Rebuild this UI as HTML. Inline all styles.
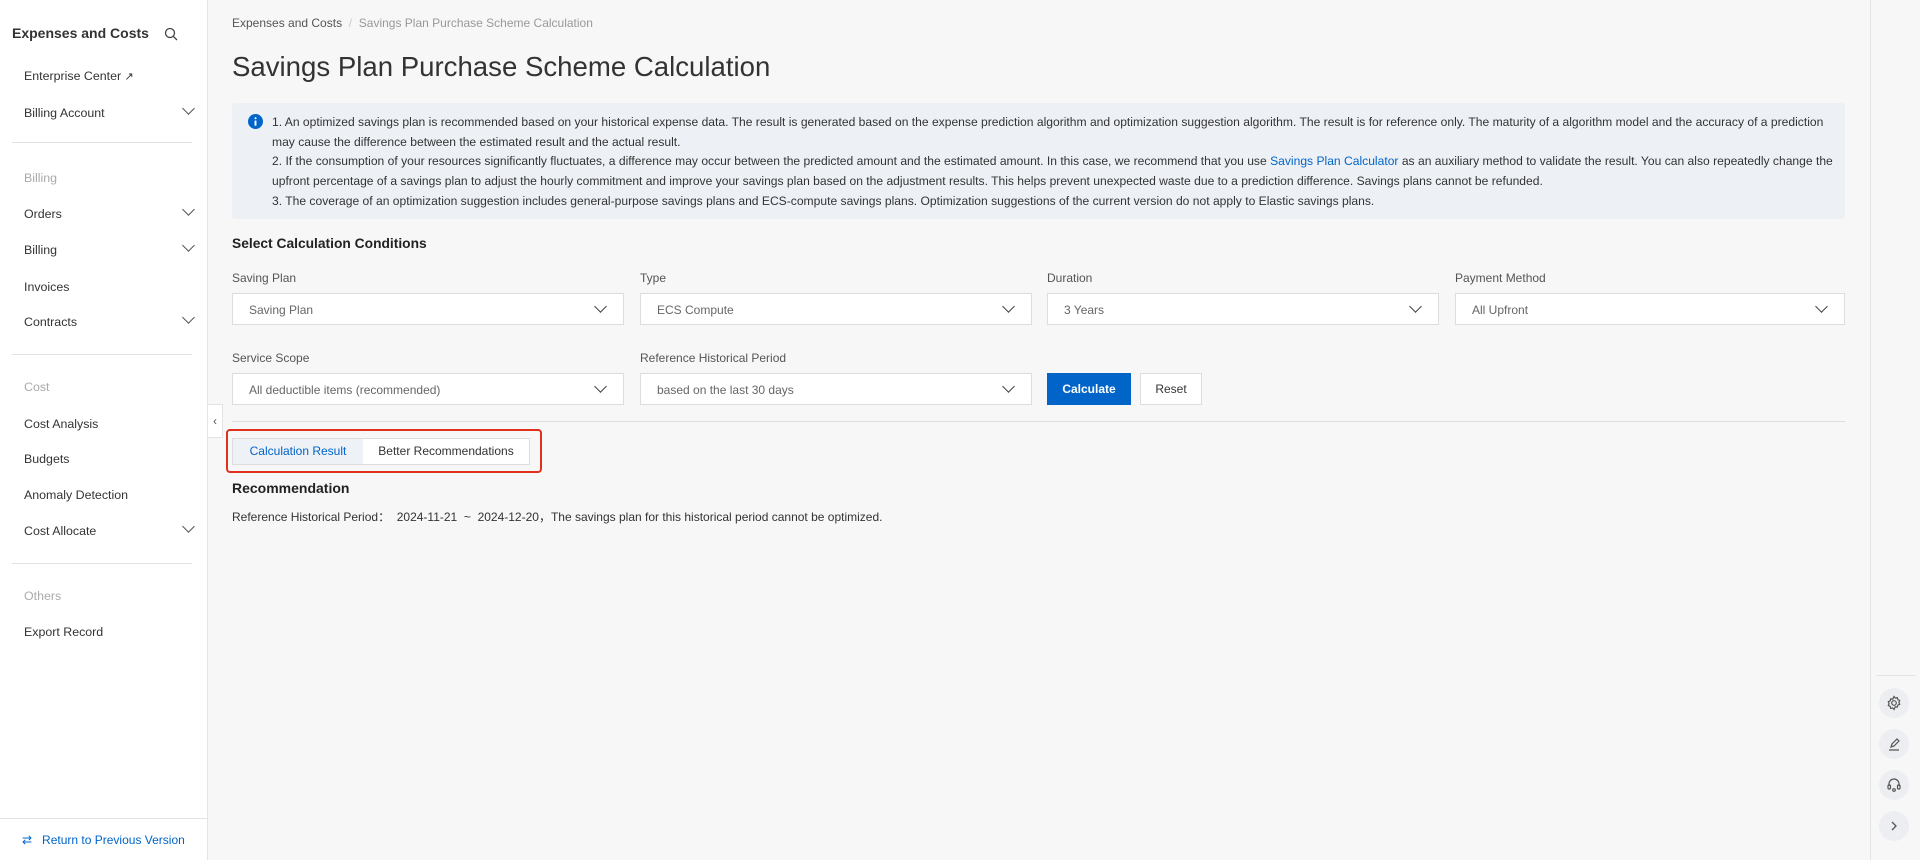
<!DOCTYPE html>
<html><head><meta charset="utf-8"><style>
*{box-sizing:border-box;margin:0;padding:0}
body{width:1920px;height:860px;overflow:hidden;background:#f7f7f7;font-family:"Liberation Sans",sans-serif;color:#333;position:relative}
.side{position:absolute;left:0;top:0;width:208px;height:860px;background:#fff;border-right:1px solid #e5e5e5}
.side .t{position:absolute;left:12px;top:25px;font-size:14px;font-weight:bold;color:#333}
.it{position:absolute;left:24px;font-size:12.4px;color:#333}
.gr{color:#aaa}
.chev{position:absolute;left:184px;width:9px;height:9px;border-right:1.5px solid #555;border-bottom:1.5px solid #555;transform:rotate(45deg)}
.dv{position:absolute;left:12px;width:180px;border-top:1px solid #e3e3e3}
.abs{position:absolute}
.sel{position:absolute;height:32px;background:#fff;border:1px solid #ddd;font-size:12px;color:#666;padding:9px 16px}
.sel:after{content:"";position:absolute;right:18px;top:8px;width:8px;height:8px;border-right:1.5px solid #444;border-bottom:1.5px solid #444;transform:rotate(45deg)}
.lbl{position:absolute;font-size:12px;color:#555}
.info{position:absolute;left:232px;top:103px;width:1613px;height:116px;background:#edf1f6;border-radius:3px}
.info p{position:absolute;left:40px;top:10px;font-size:12.1px;line-height:19.7px;color:#333;white-space:nowrap}
.rail{position:absolute;left:1870px;top:0;width:50px;height:860px;border-left:1px solid #e5e5e5;background:#f7f7f7}
.rb{position:absolute;left:1879px;width:30px;height:30px;border-radius:50%;background:#eceef1;display:flex;align-items:center;justify-content:center}
</style></head><body>
<div class="side">
<div class="t">Expenses and Costs</div>
<svg class="abs" style="left:164px;top:27px" width="14" height="14" viewBox="0 0 14 14"><circle cx="6" cy="6" r="4.5" fill="none" stroke="#444" stroke-width="1.3"/><path d="M9.3 9.3L13 13" stroke="#444" stroke-width="1.3"/></svg>
<div class="it" style="top:69px">Enterprise Center <span style="font-size:11px">↗</span></div>
<div class="it" style="top:106px">Billing Account</div><div class="chev" style="top:104px"></div>
<div class="dv" style="top:142px"></div>
<div class="it gr" style="top:171px">Billing</div>
<div class="it" style="top:207px">Orders</div><div class="chev" style="top:205px"></div>
<div class="it" style="top:243px">Billing</div><div class="chev" style="top:241px"></div>
<div class="it" style="top:280px">Invoices</div>
<div class="it" style="top:315px">Contracts</div><div class="chev" style="top:313px"></div>
<div class="dv" style="top:354px"></div>
<div class="it gr" style="top:380px">Cost</div>
<div class="it" style="top:417px">Cost Analysis</div>
<div class="it" style="top:452px">Budgets</div>
<div class="it" style="top:488px">Anomaly Detection</div>
<div class="it" style="top:524px">Cost Allocate</div><div class="chev" style="top:522px"></div>
<div class="dv" style="top:563px"></div>
<div class="it gr" style="top:589px">Others</div>
<div class="it" style="top:625px">Export Record</div>
<div class="abs" style="left:0;top:818px;width:208px;border-top:1px solid #e3e3e3"></div>
<div class="abs" style="left:22px;top:833px;font-size:12px;color:#0064c8">⇄&nbsp;&nbsp; Return to Previous Version</div>
</div>
<div class="abs" style="left:208px;top:404px;width:15px;height:34px;background:#fff;border:1px solid #e3e3e3;border-left:none;font-size:12px;color:#555;text-align:center;line-height:32px">‹</div>
<div class="abs" style="left:232px;top:16px;font-size:12px;color:#555">Expenses and Costs <span style="color:#ccc">&nbsp;/&nbsp;</span> <span style="color:#999">Savings Plan Purchase Scheme Calculation</span></div>
<div class="abs" style="left:232px;top:51px;font-size:27.6px;color:#333">Savings Plan Purchase Scheme Calculation</div>
<div class="info">
<svg class="abs" style="left:16px;top:11px" width="15" height="15" viewBox="0 0 16 16"><circle cx="8" cy="8" r="8" fill="#0064c8"/><rect x="7" y="7" width="2" height="5.5" fill="#fff"/><circle cx="8" cy="4.5" r="1.1" fill="#fff"/></svg>
<p>1. An optimized savings plan is recommended based on your historical expense data. The result is generated based on the expense prediction algorithm and optimization suggestion algorithm. The result is for reference only. The maturity of a algorithm model and the accuracy of a prediction<br>may cause the difference between the estimated result and the actual result.<br>2. If the consumption of your resources significantly fluctuates, a difference may occur between the predicted amount and the estimated amount. In this case, we recommend that you use <span style="color:#0064c8">Savings Plan Calculator</span> as an auxiliary method to validate the result. You can also repeatedly change the<br>upfront percentage of a savings plan to adjust the hourly commitment and improve your savings plan based on the adjustment results. This helps prevent unexpected waste due to a prediction difference. Savings plans cannot be refunded.<br>3. The coverage of an optimization suggestion includes general-purpose savings plans and ECS-compute savings plans. Optimization suggestions of the current version do not apply to Elastic savings plans.</p>
</div>
<div class="abs" style="left:232px;top:236px;font-size:13.8px;font-weight:bold;color:#222">Select Calculation Conditions</div>
<div class="lbl" style="left:232px;top:271px">Saving Plan</div>
<div class="lbl" style="left:640px;top:271px">Type</div>
<div class="lbl" style="left:1047px;top:271px">Duration</div>
<div class="lbl" style="left:1455px;top:271px">Payment Method</div>
<div class="sel" style="left:232px;top:293px;width:392px">Saving Plan</div>
<div class="sel" style="left:640px;top:293px;width:392px">ECS Compute</div>
<div class="sel" style="left:1047px;top:293px;width:392px">3 Years</div>
<div class="sel" style="left:1455px;top:293px;width:390px">All Upfront</div>
<div class="lbl" style="left:232px;top:351px">Service Scope</div>
<div class="lbl" style="left:640px;top:351px">Reference Historical Period</div>
<div class="sel" style="left:232px;top:373px;width:392px">All deductible items (recommended)</div>
<div class="sel" style="left:640px;top:373px;width:392px">based on the last 30 days</div>
<div class="abs" style="left:1047px;top:373px;width:84px;height:32px;background:#0064c8;color:#fff;font-size:12px;font-weight:bold;text-align:center;line-height:32px">Calculate</div>
<div class="abs" style="left:1140px;top:373px;width:62px;height:32px;background:#fff;border:1px solid #ddd;color:#333;font-size:12px;text-align:center;line-height:30px">Reset</div>
<div class="abs" style="left:232px;top:421px;width:1613px;border-top:1px solid #ddd"></div>
<div class="abs" style="left:226px;top:429px;width:316px;height:44px;border:2.5px solid #e0301e;border-radius:4px"></div>
<div class="abs" style="left:232px;top:438px;width:298px;height:27px;border:1px solid #ddd;background:#fff;font-size:12px">
<div class="abs" style="left:0;top:0;width:130px;height:25px;background:#eef1f6;color:#0064c8;text-align:center;line-height:25px">Calculation Result</div>
<div class="abs" style="left:130px;top:0;width:166px;height:25px;color:#333;text-align:center;line-height:25px">Better Recommendations</div>
</div>
<div class="abs" style="left:232px;top:480px;font-size:14px;font-weight:bold;color:#222">Recommendation</div>
<div class="abs" style="left:232px;top:508px;font-size:12px;color:#333;white-space:pre">Reference Historical Period：  2024-11-21  ~  2024-12-20，The savings plan for this historical period cannot be optimized.</div>
<div class="rail">
<div class="abs" style="left:5px;top:675px;width:40px;border-top:1px solid #e3e3e3"></div>
</div>
<div class="rb" style="top:688px"><svg width="16" height="16" viewBox="0 0 16 16" fill="none" stroke="#555" stroke-width="1.2"><circle cx="8" cy="8" r="2.3"/><path d="M8 1.5l1.3 1.6 2-.5.5 2 1.9.9-.8 1.9.8 1.9-1.9.9-.5 2-2-.5L8 14.5l-1.3-1.6-2 .5-.5-2-1.9-.9.8-1.9-.8-1.9 1.9-.9.5-2 2 .5z"/></svg></div>
<div class="rb" style="top:729px"><svg width="16" height="16" viewBox="0 0 16 16" fill="none" stroke="#555" stroke-width="1.2"><path d="M5 11l1-3 5-5 2 2-5 5zM3 14h10"/></svg></div>
<div class="rb" style="top:770px"><svg width="16" height="16" viewBox="0 0 16 16" fill="none" stroke="#555" stroke-width="1.2"><path d="M3 9V7a5 5 0 0110 0v2"/><rect x="2" y="8" width="2.5" height="4" rx="1"/><rect x="11.5" y="8" width="2.5" height="4" rx="1"/><circle cx="8" cy="13" r="1.3"/></svg></div>
<div class="rb" style="top:811px"><svg width="12" height="12" viewBox="0 0 12 12" fill="none" stroke="#555" stroke-width="1.3"><path d="M4 2l4 4-4 4"/></svg></div>
</body></html>
